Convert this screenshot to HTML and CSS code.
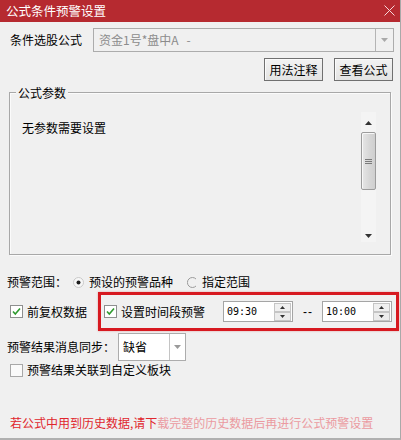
FILE: index.html
```html
<!DOCTYPE html>
<html lang="zh">
<head>
<meta charset="utf-8">
<title>公式条件预警设置</title>
<link rel="stylesheet" href="styles.css">
</head>
<body>
<div class="win">
  <div class="titlebar">
    <span class="title">公式条件预警设置</span>
    <svg class="close" width="11" height="11" viewBox="0 0 11 11"><path d="M0.5 0.5 L10.5 10.5 M10.5 0.5 L0.5 10.5" stroke="#f6d8da" stroke-width="1" fill="none"/></svg>
  </div>
  <div class="body">
    <div class="row r-formula">
      <span class="lbl-formula">条件选股公式</span>
      <div class="combo">
        <span class="combo-text">资金1号*盘中A&nbsp;&nbsp;&nbsp;-</span>
        <span class="combo-btn"><svg width="7" height="4" viewBox="0 0 7 4"><path d="M0 0 H7 L3.5 4 Z" fill="#a9a9a9"/></svg></span>
      </div>
    </div>
    <div class="row r-btns">
      <button class="btn">用法注释</button>
      <button class="btn">查看公式</button>
    </div>
    <div class="group">
      <span class="group-title">公式参数</span>
      <div class="group-text">无参数需要设置</div>
      <div class="vscroll">
        <div class="vs-up"><svg width="7" height="4" viewBox="0 0 7 4"><path d="M0 4 H7 L3.5 0 Z" fill="#333"/></svg></div>
        <div class="vs-thumb"><svg width="7" height="7" viewBox="0 0 7 7"><path d="M0 1.5 H7 M0 3.5 H7 M0 5.5 H7" stroke="#7a7a7a" stroke-width="1"/></svg></div>
        <div class="vs-track"></div>
        <div class="vs-down"><svg width="7" height="4" viewBox="0 0 7 4"><path d="M0 0 H7 L3.5 4 Z" fill="#333"/></svg></div>
      </div>
    </div>
    <div class="row r-range">
      <span class="lbl-range">预警范围：</span>
      <svg class="radio radio-1" width="11" height="11" viewBox="0 0 11 11"><circle cx="5.5" cy="5.5" r="5" fill="#f7f7f7" stroke="#c9c9c9"/><circle cx="5.5" cy="5.5" r="2" fill="#1e1e1e"/></svg>
      <span class="radio-lbl">预设的预警品种</span>
      <svg class="radio radio-2" width="11" height="11" viewBox="0 0 11 11"><path d="M9 2 A5 5 0 1 0 9 9" fill="none" stroke="#9a9a9a"/></svg>
      <span class="radio-lbl">指定范围</span>
    </div>
    <div class="row r-opts">
      <svg class="cb cb-first" width="13" height="13" viewBox="0 0 13 13"><rect x="0.5" y="0.5" width="12" height="12" fill="#fff" stroke="#8e8f8f"/><path d="M3 6.5 L5.3 9 L10 3.5" fill="none" stroke="#2f9a2f" stroke-width="1.6"/></svg>
      <span class="cb-lbl">前复权数据</span>
      <div class="highlight">
        <svg class="cb" width="13" height="13" viewBox="0 0 13 13"><rect x="0.5" y="0.5" width="12" height="12" fill="#fff" stroke="#8e8f8f"/><path d="M3 6.5 L5.3 9 L10 3.5" fill="none" stroke="#2f9a2f" stroke-width="1.6"/></svg>
        <span class="cb-lbl">设置时间段预警</span>
        <div class="spin spin-1">
          <span class="spin-val">09:30</span>
          <svg class="spin-btns" width="17" height="18" viewBox="0 0 17 18"><rect x="0.5" y="0.5" width="16" height="8" fill="#f0f0f0" stroke="#c5c5c5"/><rect x="0.5" y="9.5" width="16" height="8" fill="#ececec" stroke="#c5c5c5"/><path d="M6 6 H11 L8.5 3 Z" fill="#333"/><path d="M6 12 H11 L8.5 15 Z" fill="#333"/></svg>
        </div>
        <span class="dash">--</span>
        <div class="spin">
          <span class="spin-val">10:00</span>
          <svg class="spin-btns" width="17" height="18" viewBox="0 0 17 18"><rect x="0.5" y="0.5" width="16" height="8" fill="#f0f0f0" stroke="#c5c5c5"/><rect x="0.5" y="9.5" width="16" height="8" fill="#ececec" stroke="#c5c5c5"/><path d="M6 6 H11 L8.5 3 Z" fill="#333"/><path d="M6 12 H11 L8.5 15 Z" fill="#333"/></svg>
        </div>
      </div>
    </div>
    <div class="row r-sync">
      <span class="lbl-sync">预警结果消息同步：</span>
      <div class="select">
        <span class="select-text">缺省</span>
        <span class="select-btn"><svg width="7" height="4" viewBox="0 0 7 4"><path d="M0 0 H7 L3.5 4 Z" fill="#9a9a9a"/></svg></span>
      </div>
    </div>
    <div class="row r-link">
      <svg class="cb cb-first" width="13" height="13" viewBox="0 0 13 13"><rect x="0.5" y="0.5" width="12" height="12" fill="#fafafa" stroke="#a8a8a8"/></svg>
      <span class="cb-lbl">预警结果关联到自定义板块</span>
    </div>
    <div class="note">若公式中用到历史数据,请下<span class="note-faded">载完整的历史数据后再进行公式预警设置</span></div>
  </div>
</div>
</body>
</html>
```

FILE: styles.css
```css
html, body {
  margin: 0;
  padding: 0;
  background: #f0f0f0;
}

.win {
  width: 401px;
  height: 440px;
  box-sizing: border-box;
  background: #f0f0f0;
  border-right: 1px solid #a9a9a9;
  border-bottom: 2px solid #b0b0b0;
  display: flex;
  flex-direction: column;
  font-family: "Noto Sans CJK SC", sans-serif;
  font-size: 12px;
  line-height: 16px;
  color: #000;
  overflow: hidden;
}

.titlebar {
  height: 22px;
  flex: none;
  background: #b62a30;
  display: flex;
  align-items: center;
  justify-content: space-between;
  padding: 0 5px 0 6px;
  color: #fff;
}

.title {
  font-size: 12.5px;
}

.close {
  display: block;
  margin-bottom: 2px;
}

.body {
  flex: 1;
  display: flex;
  flex-direction: column;
  padding: 0 6px 7px 7px;
}

.row {
  display: flex;
  align-items: center;
}

/* formula row */
.r-formula {
  margin-top: 6px;
  height: 24px;
}

.lbl-formula {
  margin-left: 3px;
  width: 83px;
}

.combo {
  flex: 1;
  height: 24px;
  box-sizing: border-box;
  border: 1px solid #acacac;
  background: #f0f0f0;
  display: flex;
  align-items: center;
}

.combo-text {
  flex: 1;
  padding-left: 5px;
  color: #8c8c8c;
}

.combo-btn {
  width: 17px;
  height: 22px;
  border-left: 1px solid #b4b4b4;
  display: flex;
  align-items: center;
  justify-content: center;
}

/* buttons */
.r-btns {
  margin-top: 6px;
  justify-content: flex-end;
  gap: 11px;
  padding-right: 1px;
}

.btn {
  width: 59px;
  height: 23px;
  box-sizing: border-box;
  border: 1px solid #707070;
  border-radius: 0;
  background: linear-gradient(#f3f3f3, #e3e3e3);
  box-shadow: inset 1px 1px 0 #fbfbfb;
  font: inherit;
  color: #000;
  padding: 0;
}

/* group box */
.group {
  position: relative;
  margin: 11px 3px 0 2px;
  height: 163px;
  box-sizing: border-box;
  border: 1px solid #a8a8a8;
  box-shadow: inset 1px 1px 0 #fbfbfb, 1px 1px 0 #fbfbfb;
  display: flex;
  justify-content: space-between;
  align-items: flex-start;
  padding: 19px 14px 12px 12px;
}

.group-title {
  position: absolute;
  top: -8px;
  left: 6px;
  padding: 0 2px;
  background: #f0f0f0;
}

.group-text {
  margin-top: 8px;
}

.vscroll {
  width: 15px;
  height: 130px;
  background: #f4f4f4;
  display: flex;
  flex-direction: column;
}

.vs-up {
  height: 20px;
  display: flex;
  align-items: center;
  justify-content: center;
  padding-top: 1px;
  box-sizing: border-box;
}

.vs-thumb {
  height: 58px;
  box-sizing: border-box;
  border: 1px solid #9c9c9c;
  border-radius: 2px;
  background: linear-gradient(to right, #e6e6e6, #d6d6d6 60%, #cfcfcf);
  box-shadow: inset 1px 1px 0 #f7f7f7;
  display: flex;
  align-items: center;
  justify-content: center;
}

.vs-track {
  flex: 1;
}

.vs-down {
  height: 12px;
  display: flex;
  align-items: center;
  justify-content: center;
}

/* range row */
.r-range {
  margin-top: 18px;
  height: 18px;
}

.lbl-range {
  width: 60px;
}

.radio {
  display: block;
  flex: none;
}

.radio-1 {
  margin-left: 6px;
}

.radio-2 {
  margin-left: 14px;
}

.radio-1 + .radio-lbl {
  margin-left: 5px;
}

.radio-2 + .radio-lbl {
  margin-left: 4px;
}

/* options row */
.r-opts {
  margin-top: 1px;
  height: 39px;
}

.cb {
  display: block;
  flex: none;
}

.cb-first {
  margin-left: 3px;
}

.cb-lbl {
  margin-left: 4px;
  white-space: nowrap;
}

.highlight {
  flex: none;
  width: 301px;
  height: 39px;
  margin-left: 11px;
  box-sizing: border-box;
  border: 3px solid #d71920;
  box-shadow: 0 0 2px rgba(200, 20, 20, 0.35);
  display: flex;
  align-items: center;
  padding-left: 3px;
}

.spin {
  width: 70px;
  height: 21px;
  box-sizing: border-box;
  border: 1px solid #a5a5a5;
  background: #fff;
  display: flex;
  align-items: center;
  flex: none;
}

.spin-1 {
  margin-left: 18px;
}

.spin-val {
  flex: 1;
  padding-left: 3px;
  font-family: "DejaVu Sans Mono", monospace;
  font-size: 10px;
}

.spin-btns {
  display: block;
  margin-right: 1px;
}

.dash {
  width: 19px;
  margin-left: 10px;
  font-family: "Liberation Sans", sans-serif;
  letter-spacing: 1px;
}

/* sync row */
.r-sync {
  margin-top: 2px;
  height: 28px;
}

.lbl-sync {
  width: 108px;
}

.select {
  margin-left: 3px;
  width: 68px;
  height: 28px;
  box-sizing: border-box;
  border: 1px solid #acacac;
  background: #fff;
  display: flex;
  align-items: center;
}

.select-text {
  flex: 1;
  padding-left: 4px;
}

.select-btn {
  width: 15px;
  height: 26px;
  border-left: 1px solid #c4c4c4;
  display: flex;
  align-items: center;
  justify-content: center;
}

/* link row */
.r-link {
  margin-top: 2px;
  height: 14px;
}

/* footer note */
.note {
  margin-top: auto;
  padding-left: 3px;
  color: #e0262d;
  white-space: nowrap;
}

.note-faded {
  color: #eb9aa0;
}
```
